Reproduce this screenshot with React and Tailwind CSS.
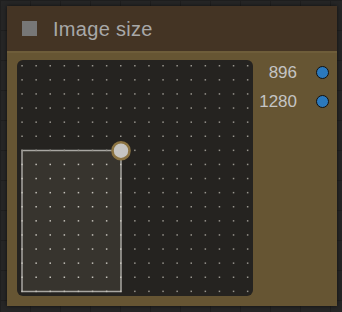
import React from "react";

function Canvas() {
  const dots = [];
  const sp = 14.1;
  for (let i = 0; i < 17; i++) {
    for (let j = 0; j < 17; j++) {
      const x = 5 + i * sp;
      const y = 5.7 + j * sp;
      if (x > 232 || y > 232) continue;
      const inside = x >= 4.9 && x <= 104.5 && y >= 90.5 && y <= 231.5;
      dots.push(
        <rect key={i + "-" + j} x={x - 0.7} y={y - 0.7} width="1.5" height="1.5" fill={inside ? "#c4c1ba" : "#97948d"} />
      );
    }
  }
  return (
    <svg width="236" height="236" viewBox="0 0 236 236" className="block">
      <rect x="5" y="90.5" width="99" height="141" fill="#37342e" stroke="#a9a7a2" strokeWidth="1.5" />
      {dots}
      <circle cx="104" cy="90.7" r="8.5" fill="#c6c5c2" stroke="#8c7442" strokeWidth="2.6" />
    </svg>
  );
}

export default function App() {
  return (
    <div
      className="w-[342px] h-[312px] pt-[6px] pl-[7px] bg-[#262626]"
      style={{
        backgroundImage:
          "linear-gradient(#1f1f1f 1px, transparent 1px), linear-gradient(90deg, #1f1f1f 1px, transparent 1px)",
        backgroundSize: "30px 30px",
      }}
    >
      <div className="w-[330px] h-[300px] flex flex-col font-['Liberation_Sans',Arial,sans-serif] shadow-[0_0_4px_rgba(0,0,0,0.6)]">
        <div className="h-[45px] bg-[#443424] flex items-center pl-[15px] shrink-0">
          <div className="w-[15px] h-[15px] bg-[#777777]" />
          <span className="ml-[16px] text-[20px] text-[#a8a8a8] leading-none tracking-[0.3px]">Image size</span>
        </div>
        <div className="flex-1 bg-[#665533] border-t-2 border-[#6e5d3a] flex pt-[7px] pl-[10px]">
          <div className="w-[236px] h-[236px] rounded-[6px] bg-[#252320] overflow-hidden shrink-0">
            <Canvas />
          </div>
          <div className="flex-1 flex flex-col items-end pr-[8px] pt-[3px] gap-[11px]">
            <div className="flex items-center h-[18px]">
              <span className="text-[17px] text-[#c4c4c4] leading-none">896</span>
              <span className="ml-[19px] w-[13px] h-[13px] rounded-full bg-[#2b79bd] border border-[#111]" />
            </div>
            <div className="flex items-center h-[18px]">
              <span className="text-[17px] text-[#c4c4c4] leading-none">1280</span>
              <span className="ml-[19px] w-[13px] h-[13px] rounded-full bg-[#2b79bd] border border-[#111]" />
            </div>
          </div>
        </div>
      </div>
    </div>
  );
}
